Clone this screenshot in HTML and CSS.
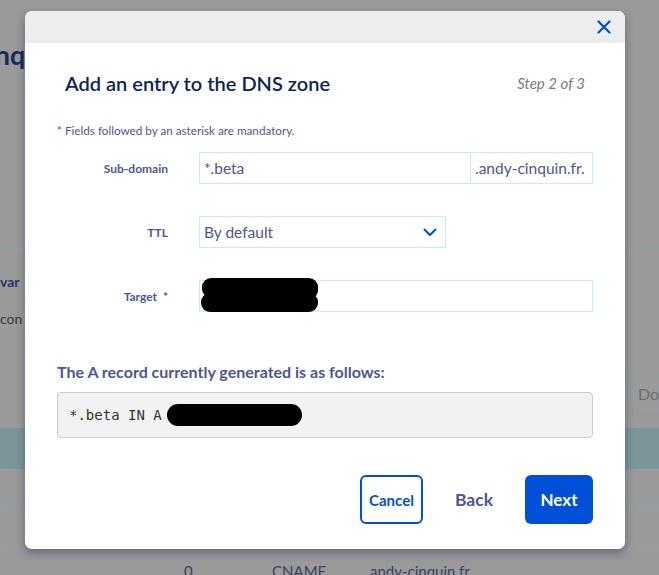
FILE: index.html
```html
<!DOCTYPE html>
<html lang="en">
<head>
<meta charset="utf-8">
<title>Add an entry to the DNS zone</title>
<link rel="stylesheet" href="styles.css">
</head>
<body>
<div class="page">
  <div class="page-head">
    <h1 class="page-title">inq</h1>
  </div>
  <div class="page-table">
    <div class="line"></div>
    <div class="section-title">var</div>
    <div class="section-text">con</div>
    <div class="filter-row"><span class="filter-input">Do</span></div>
    <div class="band"></div>
    <div class="row"></div>
    <div class="row"></div>
    <div class="row cells"><span class="c1">0</span><span class="c2">CNAME</span><span class="c3">andy-cinquin.fr.</span></div>
  </div>
</div>

<div class="modal" role="dialog">
  <div class="modal-header">
    <button class="close" aria-label="Close">
      <svg width="14" height="14" viewBox="0 0 14 14"><path d="M1.5 1.5 L12.5 12.5 M12.5 1.5 L1.5 12.5" stroke="#0050d7" stroke-width="2.2" stroke-linecap="round" fill="none"/></svg>
    </button>
  </div>
  <div class="modal-body">
    <div class="title-row">
      <h2 class="modal-title">Add an entry to the DNS zone</h2>
      <span class="step">Step 2 of 3</span>
    </div>
    <p class="mandatory"><span class="req">*</span> Fields followed by an asterisk are mandatory.</p>
    <div class="form">
      <label class="label">Sub-domain</label>
      <div class="field group">
        <span class="value">*.beta</span>
        <span class="addon">.andy-cinquin.fr.</span>
      </div>
      <label class="label">TTL</label>
      <div class="field select">
        <span class="value">By default</span>
        <svg class="chev" width="14" height="9" viewBox="0 0 14 9"><path d="M1.5 1.5 L7 7 L12.5 1.5" stroke="#0050d7" stroke-width="2" fill="none" stroke-linecap="round" stroke-linejoin="round"/></svg>
      </div>
      <label class="label">Target&nbsp; *</label>
      <div class="field target">
        <span class="redact r1"></span>
        <span class="redact r2"></span>
      </div>
    </div>
    <h3 class="record-title">The A record currently generated is as follows:</h3>
    <div class="record"><code>*.beta IN A</code><span class="redact-inline"></span></div>
    <div class="actions">
      <button class="btn btn-outline">Cancel</button>
      <button class="btn btn-link">Back</button>
      <button class="btn btn-primary">Next</button>
    </div>
  </div>
</div>
</body>
</html>
```

FILE: styles.css
```css
* { box-sizing: border-box; }
html, body { margin: 0; padding: 0; }
body {
  width: 659px;
  height: 575px;
  overflow: hidden;
  background: #9a9a9a;
  font-family: Lato, "Open Sans", sans-serif;
  position: relative;
}

/* dimmed page underneath */
.page { width: 659px; }
.page-head { height: 240px; padding-top: 40px; }
.page-title {
  margin: 0 0 0 -12px;
  font-size: 27px;
  font-weight: 700;
  color: #18295a;
  line-height: 30px;
}
.line { height: 10px; border-bottom: 1px solid #86a5aa; }
.section-title {
  margin-top: 24px;
  font-size: 14px;
  font-weight: 700;
  color: #2a3364;
  line-height: 16px;
}
.section-text {
  margin-top: 21px;
  font-size: 14px;
  color: #3a3a3a;
  line-height: 16px;
}
.filter-row {
  margin-top: 50px;
  height: 32px;
  display: flex;
  justify-content: flex-end;
}
.filter-input {
  width: 26px;
  height: 32px;
  border: 1px solid #7fa8ac;
  border-right: 0;
  font-size: 16px;
  color: #6c6c6c;
  padding: 6px 0 0 4px;
  overflow: hidden;
  white-space: nowrap;
}
.band { margin-top: 19px; height: 41px; background: #7a969b; }
.row { height: 40px; border-bottom: 1px solid #84a6ad; }
.cells { border: 0; font-size: 15px; color: #3c4060; display: flex; padding-top: 13px; }
.cells .c1 { margin-left: 184px; width: 88px; }
.cells .c2 { width: 98px; }

/* modal */
.modal {
  position: absolute;
  left: 25px;
  top: 11px;
  width: 600px;
  height: 538px;
  background: #fff;
  border-radius: 7px;
  box-shadow: 0 4px 10px rgba(40, 40, 90, 0.45);
  overflow: hidden;
}
.modal-header {
  height: 32px;
  background: #ecedec;
  display: flex;
  justify-content: flex-end;
  align-items: center;
  padding-right: 14px;
}
.close {
  background: none;
  border: 0;
  padding: 0;
  width: 14px;
  height: 14px;
  display: flex;
  cursor: pointer;
}
.modal-body { padding: 0 32px 25px 32px; }
.title-row {
  margin-top: 28px;
  padding: 0 8px;
  display: flex;
  justify-content: space-between;
  align-items: center;
  height: 24px;
}
.modal-title {
  margin: 0;
  font-size: 20px;
  font-weight: 600;
  color: #0e2458;
  line-height: 24px;
}
.step {
  font-size: 15px;
  font-style: italic;
  color: #7a7a7a;
}
.mandatory {
  margin: 28px 0 0;
  font-size: 11.7px;
  line-height: 14px;
  color: #4d5693;
}
.req { color: #e0202e; }

.form {
  margin-top: 15px;
  display: grid;
  grid-template-columns: 142px 1fr;
  row-gap: 32px;
}
.label {
  font-size: 12px;
  font-weight: 700;
  color: #4d5693;
  text-align: right;
  padding-right: 31px;
  align-self: center;
}
.field {
  height: 32px;
  border: 1px solid #bef1ff;
  display: flex;
  align-items: center;
  font-size: 15.5px;
  color: #4d5693;
}
.field .value { padding-left: 4px; flex: 1; }
.addon {
  height: 100%;
  display: flex;
  align-items: center;
  padding: 0 2px 0 4px;
  border-left: 1px solid #bef1ff;
  width: 122px;
  white-space: nowrap;
}
.select { width: 247px; }
.chev { margin-right: 8px; }
.target { position: relative; }
.redact { position: absolute; background: #000; display: block; }
.r1 { left: 2px; top: -3px; width: 116px; height: 19px; border-radius: 9px 9px 6px 8px; }
.r2 { left: 1px; top: 12px; width: 117px; height: 19px; border-radius: 9px; }

.record-title {
  margin: 50px 0 0;
  font-size: 16px;
  font-weight: 700;
  line-height: 20px;
  color: #4d5693;
}
.record {
  margin-top: 10px;
  height: 46px;
  background: #f2f2f2;
  border: 1px solid #cccccc;
  border-radius: 4px;
  display: flex;
  align-items: center;
  padding-left: 11px;
}
.record code {
  font-family: "DejaVu Sans Mono", monospace;
  font-size: 14px;
  color: #333;
}
.redact-inline {
  display: inline-block;
  margin-left: 5px;
  width: 135px;
  height: 22px;
  border-radius: 11px;
  background: #000;
}

.actions {
  margin-top: 37px;
  display: flex;
  justify-content: flex-end;
  gap: 16px;
}
.btn {
  height: 49px;
  font-family: Lato, "Open Sans", sans-serif;
  font-weight: 700;
  border-radius: 6px;
  cursor: pointer;
}
.btn-outline {
  width: 63px;
  border: 2px solid #0050d7;
  background: #fff;
  color: #0050d7;
  font-size: 15px;
  padding: 0;
}
.btn-link {
  width: 70px;
  border: 0;
  background: none;
  color: #4d5693;
  font-size: 17.5px;
  padding: 0;
}
.btn-primary {
  width: 68px;
  border: 0;
  background: #0050d7;
  color: #fff;
  font-size: 17px;
  padding: 0;
}
```
